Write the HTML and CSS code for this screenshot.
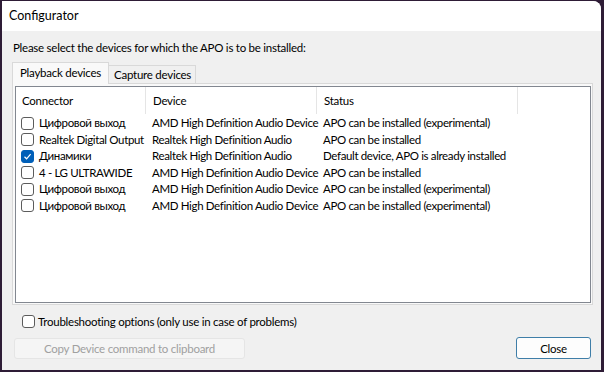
FILE: index.html
```html
<!DOCTYPE html>
<html lang="en">

<head>
    <meta charset="UTF-8">
    <meta name="viewport" content="width=device-width, initial-scale=1.0">
    <title>Configurator</title>
    <link rel="stylesheet" href="styles.css">
</head>

<body>
    <div class="window">
        <div class="titlebar">Configurator</div>

        <div class="content">
            <p class="prompt">Please select the devices for which the APO is to be installed:</p>

            <div class="tabs">
                <div class="tab active">Playback devices</div>
                <div class="tab">Capture devices</div>
            </div>

            <div class="panel">
                <div class="list">
                    <div class="row header">
                        <div class="cell">Connector</div>
                        <div class="cell sep">Device</div>
                        <div class="cell sep">Status</div>
                        <div class="cell sep"></div>
                    </div>
                    <div class="row">
                        <div class="cell first"><span class="check"></span>Цифровой выход</div>
                        <div class="cell">AMD High Definition Audio Device</div>
                        <div class="cell">APO can be installed (experimental)</div>
                    </div>
                    <div class="row">
                        <div class="cell first"><span class="check"></span>Realtek Digital Output</div>
                        <div class="cell">Realtek High Definition Audio</div>
                        <div class="cell">APO can be installed</div>
                    </div>
                    <div class="row">
                        <div class="cell first"><span class="check checked"><svg width="9" height="9" viewBox="0 0 9 9"><path d="M1.5 4.8 L3.6 6.8 L7.6 2.2" fill="none" stroke="#fff" stroke-width="1.2"/></svg></span>Динамики</div>
                        <div class="cell">Realtek High Definition Audio</div>
                        <div class="cell">Default device, APO is already installed</div>
                    </div>
                    <div class="row">
                        <div class="cell first"><span class="check"></span>4 - LG ULTRAWIDE</div>
                        <div class="cell">AMD High Definition Audio Device</div>
                        <div class="cell">APO can be installed</div>
                    </div>
                    <div class="row">
                        <div class="cell first"><span class="check"></span>Цифровой выход</div>
                        <div class="cell">AMD High Definition Audio Device</div>
                        <div class="cell">APO can be installed (experimental)</div>
                    </div>
                    <div class="row">
                        <div class="cell first"><span class="check"></span>Цифровой выход</div>
                        <div class="cell">AMD High Definition Audio Device</div>
                        <div class="cell">APO can be installed (experimental)</div>
                    </div>
                </div>
            </div>

            <label class="option"><span class="check"></span>Troubleshooting options (only use in case of problems)</label>

            <div class="buttons">
                <button class="copy" disabled>Copy Device command to clipboard</button>
                <button class="close">Close</button>
            </div>
        </div>
    </div>
</body>

</html>
```

FILE: styles.css
```css
body {
    margin: 0;
    background: #2e1c36;
    font-family: Lato, "Noto Sans", sans-serif;
    font-size: 11.5px;
    letter-spacing: -0.25px;
    color: #000;
}

.window {
    margin: 1px 3px 2px 2px;
    height: 369px;
    background: #f0f0f0;
    border-radius: 0 8px 0 0;
    overflow: hidden;
    display: flex;
    flex-direction: column;
}

.titlebar {
    height: 30px;
    line-height: 30px;
    padding-left: 7px;
    background: #ffffff;
    font-size: 12.5px;
    letter-spacing: 0;
}

.content {
    flex: 1;
    padding: 0 8px 0 10px;
}

.prompt {
    margin: 9px 0 0 1px;
    height: 16px;
    line-height: 16px;
}

.tabs {
    display: flex;
    margin-top: 5px;
    align-items: flex-end;
    height: 22px;
}

.tab {
    height: 17px;
    line-height: 17px;
    padding: 0 4px 0 5px;
    border: 1px solid #d9d9d9;
    border-left: none;
    border-bottom: none;
    background: #f0f0f0;
}

.tab.active {
    height: 21px;
    line-height: 20px;
    padding: 0 7px 0 7px;
    background: #f9f9f9;
    border-left: 1px solid #d9d9d9;
    position: relative;
    z-index: 1;
    margin-bottom: -1px;
}

.panel {
    border: 1px solid #d9d9d9;
    background: #f9f9f9;
    padding: 2px 1px 1px 2px;
    height: 222px;
    box-sizing: border-box;
}

.list {
    border: 1px solid #828790;
    background: #fff;
    height: 217px;
    box-sizing: border-box;
}

.row {
    display: grid;
    grid-template-columns: 129px 171px 201px 1fr;
    height: 16.5px;
    line-height: 16.5px;
    white-space: nowrap;
    letter-spacing: -0.35px;
}

.row.header {
    height: 26px;
    line-height: 27px;
    margin-bottom: 2px;
    letter-spacing: -0.25px;
}

.cell {
    padding-left: 7px;
}

.cell.first {
    padding-left: 5px;
    display: flex;
    align-items: center;
}

.header .cell:first-child {
    padding-left: 6px;
}

.header .sep {
    border-left: 1px solid #e5e5e5;
}

.check {
    width: 11px;
    height: 11px;
    border: 1px solid #5c5c5c;
    border-radius: 3px;
    margin-right: 5px;
    background: #fff;
    display: inline-flex;
    align-items: center;
    justify-content: center;
    flex-shrink: 0;
}

.check.checked {
    background: #005fb8;
    border-color: #005fb8;
}

.option {
    display: flex;
    align-items: center;
    margin: 8px 0 0 10px;
    height: 16px;
}

.option .check {
    margin-right: 3px;
}

.buttons {
    display: flex;
    justify-content: space-between;
    margin-top: 9px;
    padding: 0 2px 0 2px;
}

button {
    font-family: inherit;
    font-size: 11.5px;
    letter-spacing: -0.25px;
    height: 21px;
    border-radius: 3px;
    padding: 0;
}

.copy {
    width: 231px;
    background: #f5f5f5;
    border: 1px solid #e5e5e5;
    color: #a0a0a0;
}

.close {
    width: 75px;
    background: #fdfdfd;
    border: 1px solid #3f7ea8;
    color: #000;
    margin-top: -1px;
    height: 22px;
}
```
